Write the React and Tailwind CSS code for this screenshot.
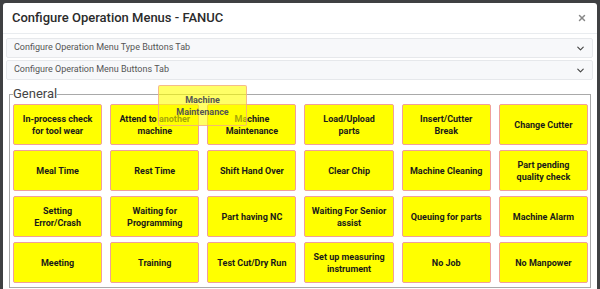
import { ChevronDown, X } from 'lucide-react';

const buttons = [
  'In-process check for tool wear',
  'Attend to another machine',
  'Machine Maintenance',
  'Load/Upload\nparts',
  'Insert/Cutter\nBreak',
  'Change Cutter',
  'Meal Time',
  'Rest Time',
  'Shift Hand Over',
  'Clear Chip',
  'Machine Cleaning',
  'Part pending quality check',
  'Setting\nError/Crash',
  'Waiting for Programming',
  'Part having NC',
  'Waiting For Senior assist',
  'Queuing for parts',
  'Machine Alarm',
  'Meeting',
  'Training',
  'Test Cut/Dry Run',
  'Set up measuring instrument',
  'No Job',
  'No Manpower',
];

const btnText = "font-['Roboto',sans-serif] text-[9px] font-bold leading-[12px] whitespace-pre-line";

export default function App() {
  return (
    <div className="w-[600px] h-[289px] overflow-hidden bg-[#3f4042] pt-[3px] pl-[3px] relative font-['Roboto',sans-serif]">
      <div className="w-[594px] h-[286px] bg-white rounded-t-[3px] overflow-hidden">
        <div className="h-[31px] flex items-center justify-between pl-[9px] pr-[10px] border-b border-[#e9ecef]">
          <h1 className="text-[13px] font-medium text-[#2b2b2b]">Configure Operation Menus - FANUC</h1>
          <X size={10} strokeWidth={3.5} className="text-[#888]" />
        </div>
        <div className="pl-[3px] pr-[4px] pt-[4px] flex flex-col gap-[2px]">
          {['Configure Operation Menu Type Buttons Tab', 'Configure Operation Menu Buttons Tab'].map((t) => (
            <div key={t} className="h-[20px] flex items-center justify-between pl-[7px] pr-[6px] bg-[#f7f8fa] border border-[#e6e8eb] rounded-[2px]">
              <span className="text-[9px] text-[#555]">{t}</span>
              <ChevronDown size={11} strokeWidth={2.5} className="text-[#444]" />
            </div>
          ))}
        </div>
        <fieldset className="mt-[6px] ml-[6px] w-[582px] border border-[#a9a9a9] pl-[3px] pr-[2px] pb-[4px]">
          <legend className="text-[13px] leading-[16px] text-[#444] font-normal">General</legend>
          <div className="grid grid-cols-6 gap-x-[8px] gap-y-[5px] pt-[2px]">
            {buttons.map((b) => (
              <div key={b} className="h-[41px] bg-[#ffff00] border border-[#f0a09a] rounded-[2px] flex items-center justify-center text-center px-[5px]">
                <span className={btnText + ' text-[#1a1a1a]'}>{b}</span>
              </div>
            ))}
          </div>
        </fieldset>
      </div>
      {/* drag ghost */}
      <div className="absolute left-[158px] top-[85px] w-[89px] h-[41px] bg-[#ffff00]/60 border border-[#f0a09a]/70 rounded-[2px] flex items-center justify-center text-center px-[5px]">
        <span className={btnText + ' text-[#555]'}>Machine Maintenance</span>
      </div>
    </div>
  );
}
